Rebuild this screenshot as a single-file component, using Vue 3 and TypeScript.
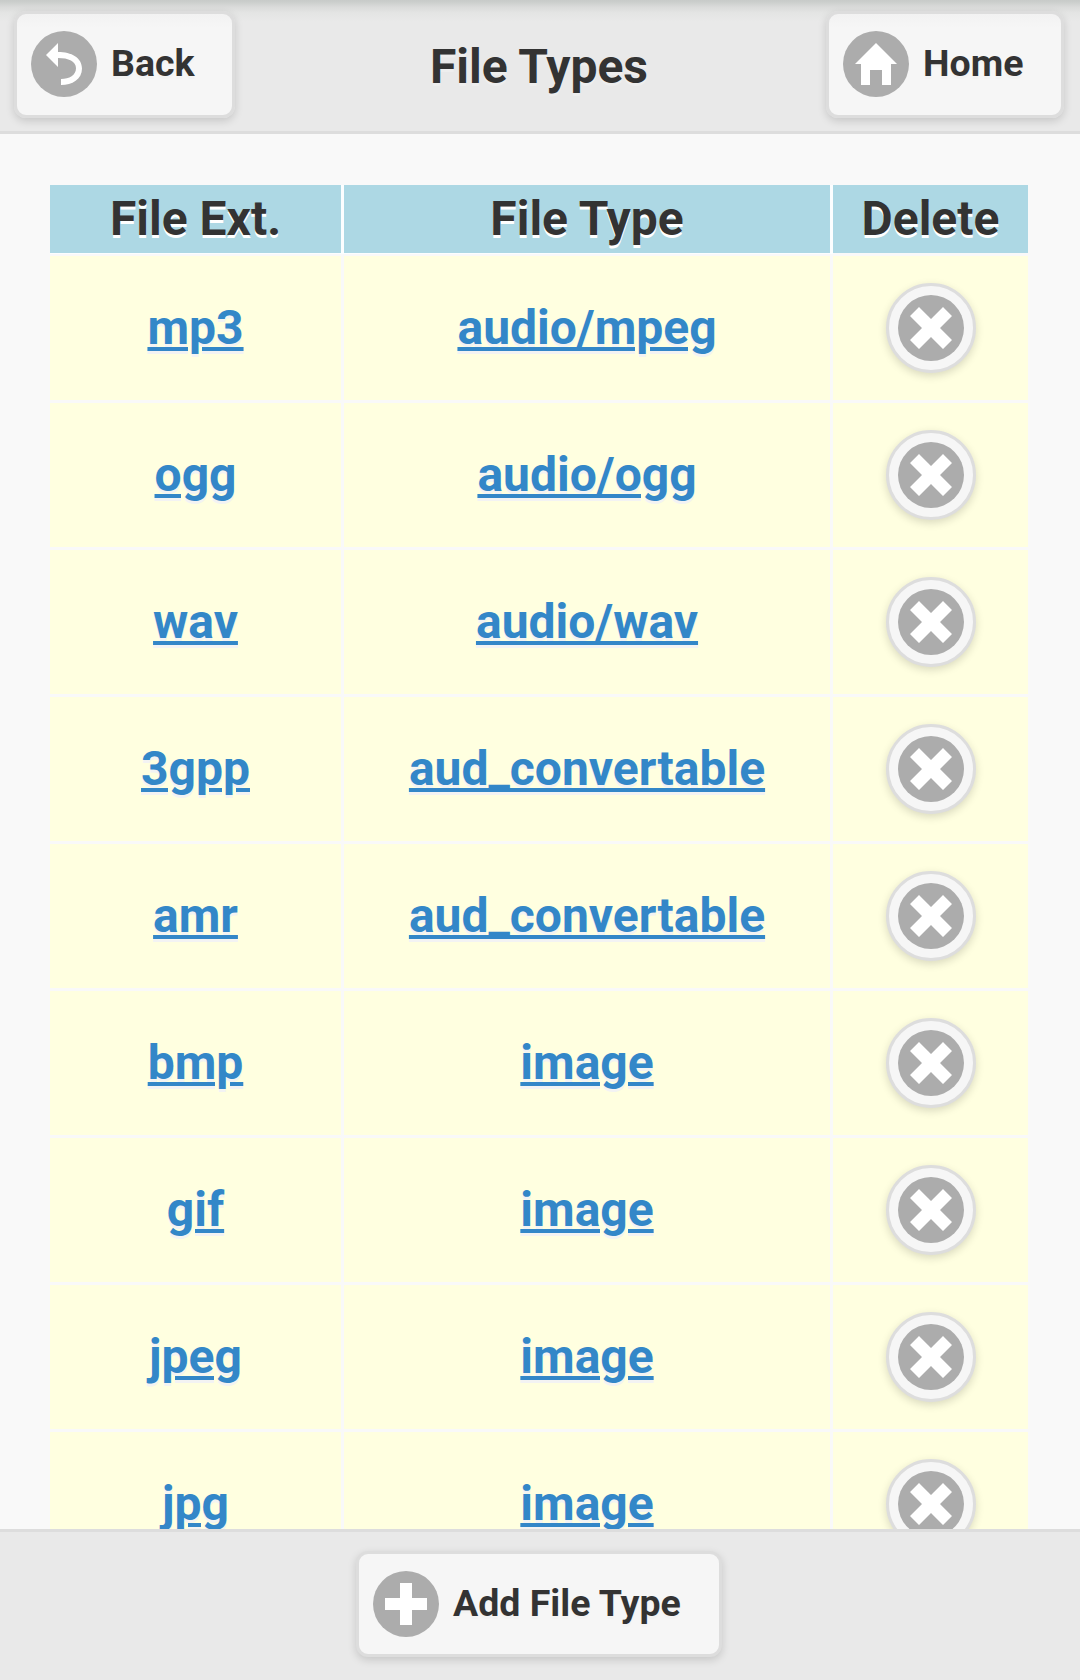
<script setup lang="ts">
interface FileType {
  ext: string
  type: string
}

const fileTypes: FileType[] = [
  { ext: 'mp3', type: 'audio/mpeg' },
  { ext: 'ogg', type: 'audio/ogg' },
  { ext: 'wav', type: 'audio/wav' },
  { ext: '3gpp', type: 'aud_convertable' },
  { ext: 'amr', type: 'aud_convertable' },
  { ext: 'bmp', type: 'image' },
  { ext: 'gif', type: 'image' },
  { ext: 'jpeg', type: 'image' },
  { ext: 'jpg', type: 'image' },
]
</script>

<template>
  <div class="page">
    <header class="header">
      <button class="btn back">
        <span class="disc">
          <svg viewBox="0 0 14 14"><path d="M5,3V0L1,4l4,4V5c3.5,0,6,1.1,6,3.4S8.8,12,6,12v2c3.7,0,7-1.9,7-5.5S9.5,3,5,3z" /></svg>
        </span>
        <span class="label">Back</span>
      </button>
      <h1>File Types</h1>
      <button class="btn home">
        <span class="disc">
          <svg viewBox="0 0 14 14"><path d="M7,0L0,7h2v7h3V9h4v5h3V7h2z" /></svg>
        </span>
        <span class="label">Home</span>
      </button>
    </header>

    <main class="content">
      <div class="grid">
        <div class="th">File Ext.</div>
        <div class="th">File Type</div>
        <div class="th">Delete</div>
        <template v-for="item in fileTypes" :key="item.ext">
          <div class="td"><a href="#">{{ item.ext }}</a></div>
          <div class="td"><a href="#">{{ item.type }}</a></div>
          <div class="td">
            <button class="delete" :aria-label="'Delete ' + item.ext">
              <span class="disc">
                <svg viewBox="0 0 14 14"><path d="M14,3L11,0L7,4L3,0L0,3L4,7L0,11L3,14L7,10L11,14L14,11L10,7z" /></svg>
              </span>
            </button>
          </div>
        </template>
      </div>
    </main>

    <footer class="footer">
      <button class="btn add">
        <span class="disc">
          <svg viewBox="0 0 14 14"><path d="M5,0h4v5h5v4H9v5H5V9H0V5h5z" /></svg>
        </span>
        <span class="label">Add File Type</span>
      </button>
    </footer>
  </div>
</template>

<style scoped>
.page {
  display: flex;
  flex-direction: column;
  width: 1080px;
  height: 1680px;
  overflow: hidden;
  background: #f9f9f9;
  color: #333;
  font-family: Roboto, 'Liberation Sans', sans-serif;
  font-size: 48px;
  font-weight: 700;
}

.page * {
  box-sizing: border-box;
}

.header {
  flex: none;
  display: grid;
  grid-template-columns: 238px 1fr 238px;
  align-items: start;
  height: 134px;
  padding: 11px 16px 0 14px;
  border-bottom: 3px solid #ddd;
  background: linear-gradient(#c8cbc9 0, #cbcecc 2px, #dadbda 7px, #e4e5e4 13px, #e9e9e9 22px);
}

h1 {
  margin: 0;
  padding-top: 28px;
  font-size: 48px;
  line-height: 56px;
  text-align: center;
  text-shadow: 0 3px 0 #eee;
}

.btn {
  display: flex;
  align-items: center;
  gap: 14px;
  height: 107px;
  padding: 0 0 1px 14px;
  border: 3px solid #ddd;
  border-radius: 12px;
  background: #f6f6f6;
  box-shadow: 0 3px 9px rgba(0, 0, 0, 0.15);
  color: #333;
  font: 700 37.5px/49px Roboto, 'Liberation Sans', sans-serif;
  text-shadow: 0 3px 0 #f3f3f3;
  white-space: nowrap;
}

.label {
  margin-bottom: 2px;
}

.header .btn {
  background: linear-gradient(#f2f2f2, #f6f6f6 14px);
}

.back {
  width: 221px;
}

.home {
  width: 238px;
}

.disc {
  flex: none;
  display: flex;
  align-items: center;
  justify-content: center;
  width: 66px;
  height: 66px;
  border-radius: 50%;
  background: #acacac;
}

.disc svg {
  display: block;
  width: 42px;
  height: 42px;
  fill: #fff;
}

.content {
  flex: 1;
  min-height: 0;
  padding: 51px 52px 0 50px;
  overflow: hidden;
}

.grid {
  display: grid;
  grid-template-columns: 291px 486px 195px;
  grid-template-rows: 68px;
  grid-auto-rows: 144px;
  gap: 3px;
}

.th,
.td {
  display: flex;
  align-items: center;
  justify-content: center;
  line-height: 56px;
}

.th {
  background: #add8e4;
  box-shadow: 0 0 0 3px #fcfeff;
  clip-path: inset(0 -3px -1px 0);
  text-shadow: 0 3px 0 #fff;
}

.th:nth-child(3) {
  clip-path: inset(0);
}

.td {
  background: #ffffe0;
}

.td a {
  color: #3387c8;
  text-decoration: underline;
  text-decoration-thickness: 4px;
  text-underline-offset: 3px;
  text-shadow: 0 3px 0 #f3f3f3;
}

.delete {
  display: flex;
  align-items: center;
  justify-content: center;
  width: 90px;
  height: 90px;
  padding: 0;
  border: 3px solid #ddd;
  border-radius: 50%;
  background: #f6f6f6;
  box-shadow: 0 3px 9px rgba(0, 0, 0, 0.15);
}

.footer {
  flex: none;
  display: flex;
  justify-content: center;
  align-items: flex-start;
  height: 151px;
  padding: 19px 2px 0 0;
  border-top: 3px solid #ddd;
  background: #e9e9e9;
}

.add {
  width: 366px;
  height: 106px;
  padding-bottom: 0;
}
</style>
